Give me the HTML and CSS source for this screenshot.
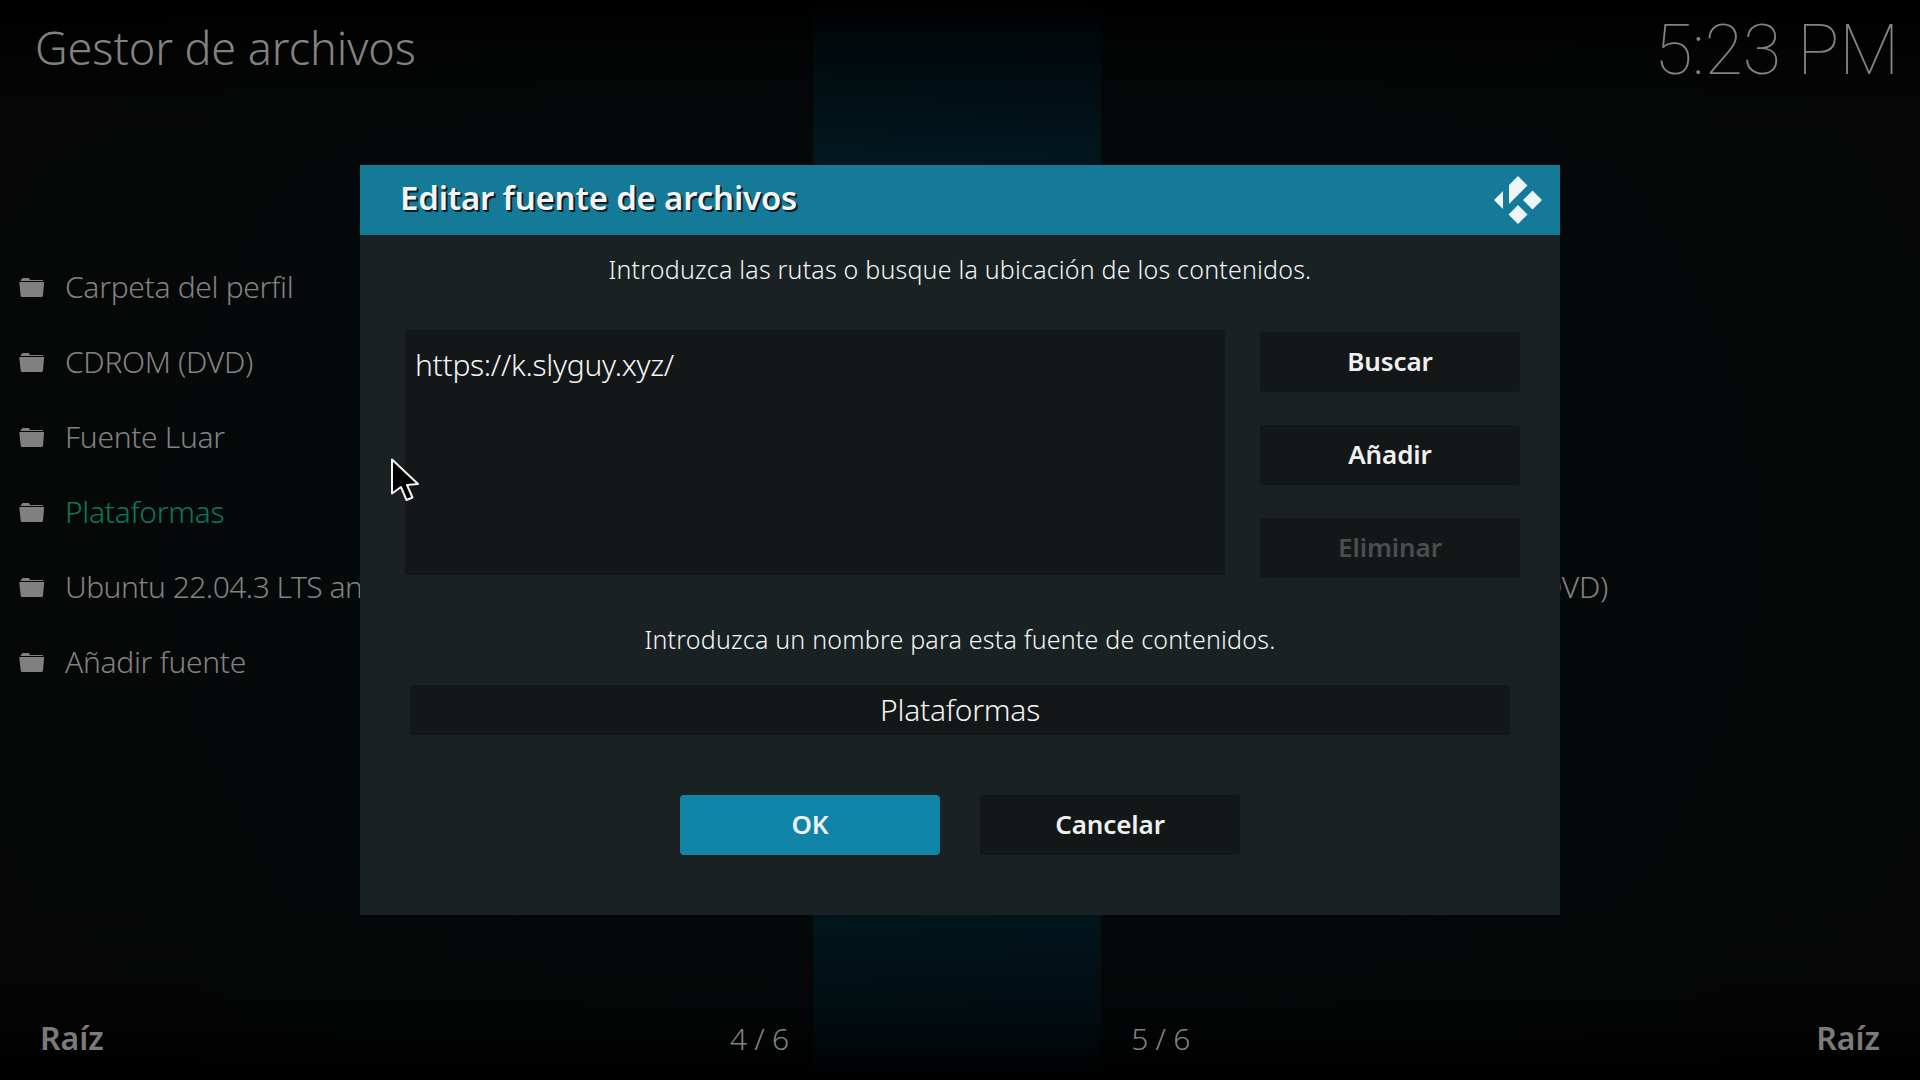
FILE: index.html
```html
<!DOCTYPE html>
<html lang="es">
<head>
<meta charset="utf-8">
<title>Gestor de archivos</title>
<link rel="stylesheet" href="styles.css">
</head>
<body>
<svg width="0" height="0" class="defs" aria-hidden="true">
  <symbol id="folder" viewBox="0 0 26 20">
    <path d="M3.500 0h6.500l1 2h13v1H1.500l.6-1.200z"/>
    <path d="M.8 4h23.800q.6 0 .5.800l-1.100 12.700q-.2 1.500-1.600 1.500H3.200q-1.400 0-1.500-1.500L.3 4.800Q.2 4 .8 4z"/>
  </symbol>
</svg>
<div class="screen">
  <header class="topbar">
    <h1 class="title">Gestor de archivos</h1>
    <time class="clock">5:23 PM</time>
  </header>
  <main class="panes">
    <ul class="files">
      <li class="file"><svg class="folder"><use href="#folder"/></svg><span>Carpeta del perfil</span></li>
      <li class="file"><svg class="folder"><use href="#folder"/></svg><span>CDROM (DVD)</span></li>
      <li class="file"><svg class="folder"><use href="#folder"/></svg><span>Fuente Luar</span></li>
      <li class="file selected"><svg class="folder"><use href="#folder"/></svg><span>Plataformas</span></li>
      <li class="file"><svg class="folder"><use href="#folder"/></svg><span class="snug">Ubuntu 22.04.3 LTS an</span></li>
      <li class="file"><svg class="folder"><use href="#folder"/></svg><span>Añadir fuente</span></li>
    </ul>
    <div class="other"><span>(DVD)</span></div>
  </main>
  <footer class="bottombar">
    <span class="path">Raíz</span>
    <span class="count left">4 / 6</span>
    <span class="count right">5 / 6</span>
    <span class="path end">Raíz</span>
  </footer>
</div>
<section class="dialog" role="dialog">
  <header class="dialog-head">
    <h2 class="dialog-title">Editar fuente de archivos</h2>
    <svg class="logo" viewBox="0 0 48 48"><path d="M24 0l9.500 9.500L15 28V9zM9 15v18L0 24zM38.500 14.500l9.500 9.500-9.500 9.500L29 24zM24 29l9.500 9.500L24 48l-9.500-9.500z"/></svg>
  </header>
  <div class="dialog-body">
    <p class="hint">Introduzca las rutas o busque la ubicación de los contenidos.</p>
    <div class="sources">
      <div class="paths">https://k.slyguy.xyz/</div>
      <div class="actions">
        <button class="btn">Buscar</button>
        <button class="btn">Añadir</button>
        <button class="btn" disabled>Eliminar</button>
      </div>
    </div>
    <p class="hint name-hint">Introduzca un nombre para esta fuente de contenidos.</p>
    <div class="name">Plataformas</div>
    <div class="confirm">
      <button class="btn primary">OK</button>
      <button class="btn">Cancelar</button>
    </div>
  </div>
</section>
<svg class="cursor" viewBox="0 0 36 50"><path d="M2 2.500v34l9-6.500 5.500 13 6-2.500L17 28l11-1z"/></svg>
</body>
</html>
```
FILE: styles.css
```css
* { box-sizing: border-box; margin: 0; padding: 0; }

body {
  width: 1920px;
  height: 1080px;
  overflow: hidden;
  position: relative;
  background: #000;
  font-family: "Noto Sans", "Open Sans", sans-serif;
  font-weight: 300;
  font-size: 30px;
}

.defs { position: absolute; }

.screen {
  height: 1080px;
  display: flex;
  flex-direction: column;
  color: #828282;
  background:
    linear-gradient(#000 0, rgba(0, 0, 0, .6) 50px, transparent 160px, transparent 900px, rgba(0, 0, 0, .5) 1020px, #000 1080px),
    linear-gradient(90deg, transparent 812px, #02181f 814px, #02161f 1100px, transparent 1102px),
    radial-gradient(ellipse 1100px 900px at 960px 540px, #04090d, #06090a 60%, #060706);
}

.topbar {
  height: 249px;
  display: flex;
  justify-content: space-between;
  padding: 0 21px 0 35px;
}
.title { font-size: 45px; font-weight: 300; line-height: 96px; letter-spacing: -.05px; }
.clock { font-family: Roboto, sans-serif; font-weight: 100; font-size: 70px; line-height: 101px; letter-spacing: -.2px; }

.panes { height: 751px; display: flex; justify-content: space-between; letter-spacing: -.32px; }
.files { list-style: none; width: 360px; }
.file { height: 75px; display: flex; align-items: center; padding-left: 19px; gap: 20px; white-space: nowrap; }
.folder { width: 26px; height: 20px; flex: none; margin-top: 2px; fill: #808080; }
.snug { letter-spacing: -.52px; }
.selected { color: #067a5a; }
.other { width: 960px; padding-top: 300px; }
.other span { display: block; width: 648px; text-align: right; line-height: 75px; }

.bottombar { height: 80px; display: grid; grid-template-columns: 690px 270px 270px 690px; line-height: 78px; letter-spacing: -.3px; }
.path { font-size: 32px; font-weight: 600; line-height: 76px; padding-left: 40px; letter-spacing: 0; color: #7b7b7b; }
.path.end { text-align: right; padding: 0 40px 0 0; }
.count.left { padding-left: 40px; }
.count.right { text-align: right; padding-right: 40px; }

.dialog {
  position: absolute;
  left: 360px;
  top: 165px;
  width: 1200px;
  height: 750px;
  background: #1a2123;
  color: #f4f4f4;
}
.dialog-head {
  height: 70px;
  display: flex;
  justify-content: space-between;
  align-items: center;
  padding: 0 18px 0 40px;
  background: #157a97;
}
.dialog-title { font-size: 33px; font-weight: 600; letter-spacing: -.2px; line-height: 68px; padding-bottom: 4px; text-shadow: 1px 1px 1px #0a1a20, 2px 2px 0 #10242b; }
.logo { width: 48px; height: 48px; fill: #ecf5f8; }

.hint { height: 95px; font-size: 25px; letter-spacing: .2px; line-height: 68px; text-align: center; }
.sources { height: 245px; display: flex; gap: 35px; padding-left: 45px; }
.paths { width: 820px; padding: 14px 10px; border-radius: 4px; background: #131718; line-height: 41px; letter-spacing: -.3px; }
.actions { display: flex; flex-direction: column; gap: 33px; padding-top: 2px; }
.btn {
  width: 260px;
  height: 60px;
  padding-bottom: 2px;
  border: 0;
  border-radius: 4px;
  background: #131718;
  color: #f0f0f0;
  font: 600 26px/58px "Noto Sans", "Open Sans", sans-serif;
  letter-spacing: -.1px;
}
.btn:disabled { color: #4b4e4f; }
.name-hint { height: 110px; line-height: 128px; }
.name { width: 1100px; height: 50px; margin-left: 50px; border-radius: 4px; background: #131718; line-height: 49px; letter-spacing: -.25px; text-align: center; }
.confirm { display: flex; justify-content: center; gap: 40px; padding-top: 60px; }
.primary { background: #1084a6; }

.cursor {
  position: absolute;
  left: 390px;
  top: 457px;
  width: 36px;
  height: 50px;
  fill: #000;
  stroke: #f2f2f2;
  stroke-width: 2;
  stroke-linejoin: round;
}
```
